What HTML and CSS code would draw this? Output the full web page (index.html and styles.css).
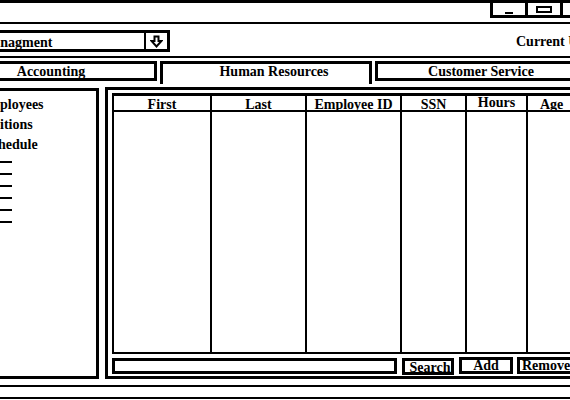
FILE: index.html
```html
<!DOCTYPE html>
<html lang="en">
<head>
<meta charset="utf-8">
<title>Human Resources</title>
<link rel="stylesheet" href="styles.css">
</head>
<body>
<div class="window">
  <div class="titlebar">
    <div class="winbtns">
      <span class="wb"><span class="min-glyph"></span></span>
      <span class="wb"><span class="max-glyph"></span></span>
      <span class="wb wb-last"><span class="close-glyph">X</span></span>
    </div>
  </div>
  <div class="toolbar">
    <div class="dropdown">
      <span class="dd-text">Managment</span>
      <span class="dd-btn">
        <svg width="13" height="13" viewBox="0 0 13 13" aria-hidden="true">
          <path d="M4.5 1.5 H8.5 V6 H11.5 L6.5 11.5 L1.5 6 H4.5 Z" fill="#fff" stroke="#000" stroke-width="2" stroke-linejoin="miter"/>
        </svg>
      </span>
    </div>
    <span class="user">Current User: Admin</span>
  </div>
  <div class="tabs">
    <div class="tab">Accounting</div>
    <div class="tab tab-active">Human Resources</div>
    <div class="tab">Customer Service</div>
  </div>
  <div class="content">
    <aside class="side">
      <div class="nav-item">Employees</div>
      <div class="nav-item">Positions</div>
      <div class="nav-item nav-shift">Schedule</div>
      <div class="dashes">
        <span class="dash"></span>
        <span class="dash"></span>
        <span class="dash"></span>
        <span class="dash"></span>
        <span class="dash"></span>
        <span class="dash"></span>
      </div>
    </aside>
    <section class="main">
      <div class="grid">
        <div class="col c1"><div class="hd">First</div><div class="bd"></div></div>
        <div class="col c2"><div class="hd">Last</div><div class="bd"></div></div>
        <div class="col c3"><div class="hd">Employee ID</div><div class="bd"></div></div>
        <div class="col c4"><div class="hd">SSN</div><div class="bd"></div></div>
        <div class="col c5"><div class="hd hd-up">Hours</div><div class="bd"></div></div>
        <div class="col c6"><div class="hd hd-age">Age</div><div class="bd"></div></div>
      </div>
      <div class="searchbar">
        <span class="search-input"></span>
        <span class="btn btn-search">Search</span>
        <span class="btn btn-add">Add</span>
        <span class="btn btn-remove">Remove</span>
      </div>
    </section>
  </div>
  <div class="status"></div>
</div>
</body>
</html>
```
FILE: styles.css
```css
* { box-sizing: border-box; }
html, body {
  margin: 0;
  padding: 0;
  background: #fff;
  overflow: hidden;
}
body {
  width: 570px;
  height: 400px;
  font-family: "Liberation Serif", "Times New Roman", serif;
  font-weight: bold;
  font-size: 14px;
  color: #000;
}
.window {
  width: 820px;
  margin-left: -60px;
  height: 400px;
  border-top: 3px solid #000;
}
.titlebar {
  height: 21px;
  border-bottom: 2px solid #000;
  display: flex;
}
.winbtns {
  display: flex;
  flex-shrink: 0;
  margin-left: 550px;
  height: 15px;
}
.wb {
  flex-shrink: 0;
  width: 35px;
  height: 15px;
  border-left: 3px solid #000;
  border-bottom: 3px solid #000;
  display: flex;
  align-items: center;
  justify-content: center;
}
.wb-last { border-right: 3px solid #000; }
.min-glyph {
  width: 8px;
  height: 2px;
  background: #000;
  margin-top: 7px;
}
.max-glyph {
  width: 16px;
  height: 7px;
  border: 2px solid #000;
}
.close-glyph { font-size: 11px; }
.toolbar {
  height: 34px;
  border-bottom: 2px solid #000;
  display: flex;
  align-items: flex-start;
}
.dropdown {
  flex-shrink: 0;
  margin-left: 35px;
  margin-top: 6px;
  width: 195px;
  height: 22px;
  border: 3px solid #000;
  display: flex;
}
.dd-text {
  width: 168px;
  flex-shrink: 0;
  border-right: 2px solid #000;
  padding-left: 2px;
  line-height: 19px;
}
.dd-btn {
  flex: 1;
  display: flex;
  align-items: center;
  justify-content: center;
}
.dd-btn svg { display: block; }
.user {
  margin-left: 346px;
  margin-top: 10px;
  line-height: 16px;
  white-space: nowrap;
}
.tabs {
  height: 29px;
  padding-top: 3px;
  padding-left: 5px;
  display: flex;
  align-items: flex-start;
  gap: 3px;
}
.tab {
  flex-shrink: 0;
  width: 212px;
  height: 20px;
  border: 3px solid #000;
  text-align: center;
  line-height: 16px;
  white-space: nowrap;
}
.tab-active {
  height: 23px;
  border-bottom: 0;
  padding-left: 16px;
  line-height: 16px;
}
.content {
  height: 292px;
  display: flex;
  align-items: flex-start;
}
.side {
  flex-shrink: 0;
  margin-left: 20px;
  margin-top: 1px;
  width: 139px;
  height: 291px;
  border: 3px solid #000;
  padding-top: 4px;
  padding-left: 16px;
}
.nav-item {
  line-height: 20px;
  height: 20px;
  white-space: nowrap;
}
.nav-shift { margin-left: 5px; }
.dashes {
  display: flex;
  flex-direction: column;
  gap: 10px;
  padding-top: 6px;
}
.dash {
  display: block;
  width: 33px;
  height: 2px;
  background: #000;
}
.main {
  margin-left: 6px;
  flex: 1;
  min-width: 0;
  height: 292px;
  border: 3px solid #000;
  padding: 3px 0 2px 4px;
  display: flex;
  flex-direction: column;
  overflow: hidden;
}
.grid {
  height: 261px;
  flex-shrink: 0;
  display: flex;
  border-top: 3px solid #000;
  border-left: 2px solid #000;
  border-bottom: 2px solid #000;
}
.col {
  flex-shrink: 0;
  display: flex;
  flex-direction: column;
}
.col + .col { border-left: 2px solid #000; }
.c1 { width: 96px; }
.c2 { width: 95px; }
.c3 { width: 95px; }
.c4 { width: 65px; }
.c5 { width: 61px; }
.c6 { width: 200px; }
.hd {
  height: 16px;
  border-bottom: 2px solid #000;
  text-align: center;
  line-height: 14px;
  padding-top: 2px;
  white-space: nowrap;
}
.hd-up { padding-top: 0; }
.hd-age { text-align: left; padding-left: 12px; }
.bd { flex: 1; }
.searchbar {
  margin-top: 3px;
  height: 17px;
  flex-shrink: 0;
  display: flex;
  align-items: flex-start;
}
.search-input {
  flex-shrink: 0;
  width: 285px;
  height: 16px;
  margin-top: 1px;
  border: 3px solid #000;
}
.btn {
  flex-shrink: 0;
  height: 17px;
  border: 3px solid #000;
  text-align: center;
  line-height: 12px;
  white-space: nowrap;
}
.btn-search {
  margin-left: 5px;
  width: 52px;
  margin-top: 1px;
  line-height: 14px;
  padding-left: 4px;
}
.btn-add {
  margin-left: 5px;
  width: 54px;
}
.btn-remove {
  margin-left: 4px;
  width: 80px;
  text-align: left;
  padding-left: 2px;
}
.status {
  margin-top: 6px;
  height: 14px;
  border-top: 2px solid #000;
  border-bottom: 2px solid #000;
}
```
